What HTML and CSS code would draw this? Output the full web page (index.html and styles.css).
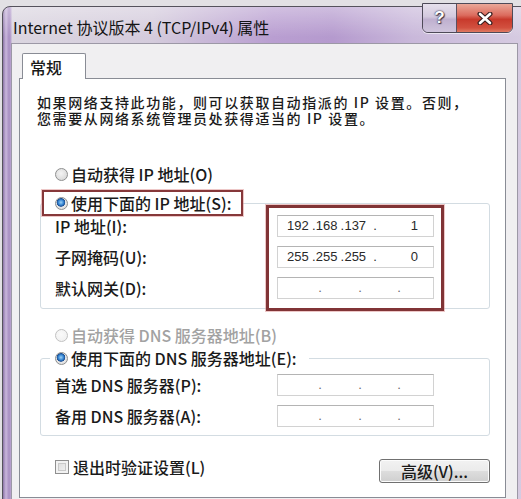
FILE: index.html
```html
<!DOCTYPE html>
<html lang="zh-CN">
<head>
<meta charset="utf-8">
<title>Internet 协议版本 4 (TCP/IPv4) 属性</title>
<link rel="stylesheet" href="styles.css">
</head>
<body>
<div class="window">
  <div class="titlebar">
    <div class="title">Internet 协议版本 4 (TCP/IPv4) 属性</div>
    <div class="caption-btns">
      <div class="cbtn help">?</div>
      <div class="cbtn close">
        <svg width="16" height="13" viewBox="0 0 16 13">
          <path d="M3 2 L13 11 M13 2 L3 11" stroke="#3a2020" stroke-width="5" stroke-linecap="round"/>
          <path d="M3 2 L13 11 M13 2 L3 11" stroke="#fff" stroke-width="2.6" stroke-linecap="round"/>
        </svg>
      </div>
    </div>
  </div>
  <div class="client">
    <div class="tabs"><div class="tab">常规</div></div>
    <div class="panel">
      <p class="desc">如果网络支持此功能，则可以获取自动指派的 IP 设置。否则，<br>您需要从网络系统管理员处获得适当的 IP 设置。</p>

      <div class="opt"><span class="radio"></span>自动获得 IP 地址(O)</div>

      <fieldset class="group ip-group">
        <legend class="legend marked"><span class="radio on"></span>使用下面的 IP 地址(S):</legend>
        <div class="group-body ip-body">
          <div class="labels">
            <div class="lbl">IP 地址(I):</div>
            <div class="lbl">子网掩码(U):</div>
            <div class="lbl">默认网关(D):</div>
          </div>
          <div class="fields marked-box">
            <div class="ipbox"><span class="oct">192</span><span class="dot">.</span><span class="oct">168</span><span class="dot">.</span><span class="oct">137</span><span class="dot d3">.</span><span class="oct last">1</span></div>
            <div class="ipbox"><span class="oct">255</span><span class="dot">.</span><span class="oct">255</span><span class="dot">.</span><span class="oct">255</span><span class="dot d3">.</span><span class="oct last">0</span></div>
            <div class="ipbox empty"><span class="gap g1"></span><span class="dot">.</span><span class="gap g2"></span><span class="dot">.</span><span class="gap g3"></span><span class="dot">.</span></div>
          </div>
        </div>
      </fieldset>

      <div class="opt disabled dns-auto"><span class="radio off-dis"></span>自动获得 DNS 服务器地址(B)</div>

      <fieldset class="group dns-group">
        <legend class="legend plain"><span class="radio on"></span>使用下面的 DNS 服务器地址(E):</legend>
        <div class="group-body dns-body">
          <div class="labels wide">
            <div class="lbl">首选 DNS 服务器(P):</div>
            <div class="lbl">备用 DNS 服务器(A):</div>
          </div>
          <div class="fields">
            <div class="ipbox empty"><span class="gap g1"></span><span class="dot">.</span><span class="gap g2"></span><span class="dot">.</span><span class="gap g3"></span><span class="dot">.</span></div>
            <div class="ipbox empty"><span class="gap g1"></span><span class="dot">.</span><span class="gap g2"></span><span class="dot">.</span><span class="gap g3"></span><span class="dot">.</span></div>
          </div>
        </div>
      </fieldset>

      <div class="bottom">
        <div class="check-opt"><span class="checkbox"></span>退出时验证设置(L)</div>
        <div class="button">高级(V)...</div>
      </div>
    </div>
  </div>
</div>
</body>
</html>
```

FILE: styles.css
```css
* { box-sizing: border-box; margin: 0; padding: 0; }

html, body {
  width: 521px;
  height: 499px;
  overflow: hidden;
}

body {
  background: #e2e0e4;
  font-family: "Noto Sans CJK SC", "Noto Sans", sans-serif;
  color: #1a1a1a;
}

.window {
  margin: 6px 0 0 2px;
  width: 530px;
  height: 520px;
  border: 1px solid #55525c;
  border-radius: 8px 8px 0 0;
  padding: 0 0 0 8px;
  display: flex;
  flex-direction: column;
  background:
    linear-gradient(180deg, rgba(255,255,255,0.35) 0px, rgba(255,255,255,0) 30px),
    linear-gradient(90deg, #8c74a8 0px, #c9b6dc 3px, #a78dc2 6px, #b9a4cf 8px, transparent 9px),
    linear-gradient(90deg, #dbd6e0 0px, #d4cbdc 150px, #b99ed1 270px, #b59ace 330px, #c9b8da 410px, #d6cbe1 520px);
}

.titlebar {
  height: 36px;
  display: flex;
  align-items: flex-start;
}

.title {
  margin-left: 2px;
  padding-top: 10px;
  font-size: 16px;
  line-height: 20px;
  color: #141414;
  white-space: nowrap;
}

.caption-btns {
  margin-left: auto;
  margin-right: 18px;
  margin-top: -4px;
  display: flex;
  height: 30px;
  border: 1px solid #4e4a58;
  border-radius: 0 0 6px 6px;
  overflow: hidden;
  box-shadow: 0 1px 0 rgba(255,255,255,0.6);
}

.cbtn {
  height: 28px;
  display: flex;
  align-items: center;
  justify-content: center;
}

.help {
  width: 34px;
  border-right: 1px solid #5b5060;
  background: linear-gradient(180deg, #e6e0ec 0%, #d3c9de 45%, #bfb0cf 55%, #cfc4dc 100%);
  color: #fff;
  font-family: "Liberation Sans", sans-serif;
  font-weight: bold;
  font-size: 17px;
  text-shadow: 0 0 2px #3c3448, 0 0 1px #3c3448, 1px 1px 1px #3c3448;
}

.close {
  width: 55px;
  background: linear-gradient(180deg, #eaa899 0%, #dc6c5e 40%, #c83a2c 55%, #d2503f 85%, #e07a62 100%);
}

.client {
  width: 507px;
  flex: 1;
  background: #f0eff1;
  border: 1px solid #9c98a6;
  border-bottom: none;
  padding: 9px 11px 0 7px;
  display: flex;
  flex-direction: column;
}

.tabs {
  display: flex;
  padding-left: 3px;
  position: relative;
  z-index: 1;
  margin-bottom: -1px;
}

.tab {
  width: 64px;
  height: 26px;
  background: #fff;
  border: 1px solid #898c95;
  border-bottom: none;
  border-radius: 2px 2px 0 0;
  font-size: 16px;
  line-height: 26px;
  padding-left: 7px;
  font-weight: 500;
}

.panel {
  height: 420px;
  background: #fff;
  border: 1px solid #898c95;
  padding: 15px 15px 0 20px;
  font-size: 16px;
  font-weight: 500;
}

.desc {
  margin-left: -3px;
  font-size: 14px;
  letter-spacing: 1.6px;
  line-height: 16px;
  white-space: nowrap;
}

.opt {
  margin-top: 38px;
  height: 20px;
  display: flex;
  align-items: center;
  padding-left: 15px;
  line-height: 20px;
  white-space: nowrap;
}

.radio {
  width: 13px;
  height: 13px;
  border-radius: 50%;
  border: 1px solid #8e8f8f;
  background: radial-gradient(circle at 45% 40%, #f4f4f4 0%, #dcdcdc 70%, #cfcfcf 100%);
  margin-right: 3px;
  flex: none;
  display: inline-block;
}

.radio.on {
  background:
    radial-gradient(circle at 45% 40%, #9fd2f6 0px, #3a8ad6 2.5px, #1a4e93 4px, transparent 4.6px),
    radial-gradient(circle at 50% 50%, #f2f2f2 0%, #dadada 100%);
}

.radio.off-dis {
  border-color: #c2c2c2;
  background: radial-gradient(circle at 45% 40%, #fafafa 0%, #eeeeee 100%);
}

.disabled { color: #a2a2a2; }

.group {
  border: 1px solid #d3dce2;
  border-radius: 3px;
  padding: 0;
  min-width: 0;
}

.legend {
  display: flex;
  align-items: center;
  white-space: nowrap;
}

.ip-group { margin-top: 6px; }

.legend.marked {
  margin-left: 1px;
  height: 26px;
  width: 201px;
  padding-left: 11px;
  border: 2px solid #86383a;
  box-shadow: 0 0 0 1px rgba(214, 130, 130, 0.45);
  background: #fff;
}

.legend.plain {
  margin-left: 9px;
  height: 20px;
  padding: 0 12px 0 5px;
}

.group-body {
  display: flex;
  align-items: flex-start;
}

.ip-body {
  margin-top: -11px;
  margin-bottom: -3px;
}

.labels {
  width: 225px;
  padding-left: 14px;
  padding-top: 10px;
  display: flex;
  flex-direction: column;
  gap: 9px;
}

.labels.wide {
  width: 236px;
  padding-top: 0;
}

.lbl {
  height: 22px;
  line-height: 22px;
  white-space: nowrap;
}

.fields {
  display: flex;
  flex-direction: column;
  gap: 9px;
}

.marked-box {
  border: 3px solid #813436;
  box-shadow: 0 0 0 1px rgba(214, 130, 130, 0.45);
  padding: 7px 7px 9px 8px;
}

.ipbox {
  width: 157px;
  height: 22px;
  border: 1px solid #d2d2d2;
  border-top-color: #b4b4b4;
  background: #fff;
  display: flex;
  align-items: center;
  padding: 0 15px 0 9px;
  font-family: "Liberation Sans", sans-serif;
  font-weight: normal;
  font-size: 13px;
  line-height: 20px;
  color: #2a2a2a;
}

.dot {
  width: 4px;
  margin-left: 3px;
  text-align: center;
}

.dot.d3 { margin-left: 7px; }

.oct.last {
  flex: 1;
  text-align: right;
}

.ipbox.empty {
  padding: 0;
  color: #6a6a6a;
}

.ipbox.empty .dot { width: 6px; margin-left: 0; }
.gap.g1 { width: 39px; }
.gap.g2 { width: 34px; }
.gap.g3 { width: 33px; }

.dns-auto { margin-top: 16px; }

.dns-group { margin-top: 3px; }

.dns-body {
  padding-top: 6px;
  padding-bottom: 8px;
}

.bottom {
  margin-top: 21px;
  display: flex;
  align-items: flex-start;
  justify-content: space-between;
}

.check-opt {
  padding-left: 15px;
  display: flex;
  align-items: center;
  height: 20px;
  white-space: nowrap;
}

.checkbox {
  width: 14px;
  height: 14px;
  border: 1px solid #8f8f8f;
  background: linear-gradient(135deg, #d8d8d8 0%, #f6f6f6 100%);
  box-shadow: inset 0 0 0 2px #f2f2f2, inset 0 0 0 3px #c9c9c9;
  margin-right: 4px;
  flex: none;
}

.button {
  margin-top: 2px;
  width: 111px;
  height: 24px;
  border: 1px solid #707070;
  border-radius: 3px;
  background: linear-gradient(180deg, #f2f2f2 0%, #ebebeb 48%, #dddddd 52%, #cfcfcf 100%);
  box-shadow: inset 0 0 0 1px #fcfcfc;
  text-align: center;
  line-height: 22px;
  font-size: 16px;
  white-space: nowrap;
}
```
